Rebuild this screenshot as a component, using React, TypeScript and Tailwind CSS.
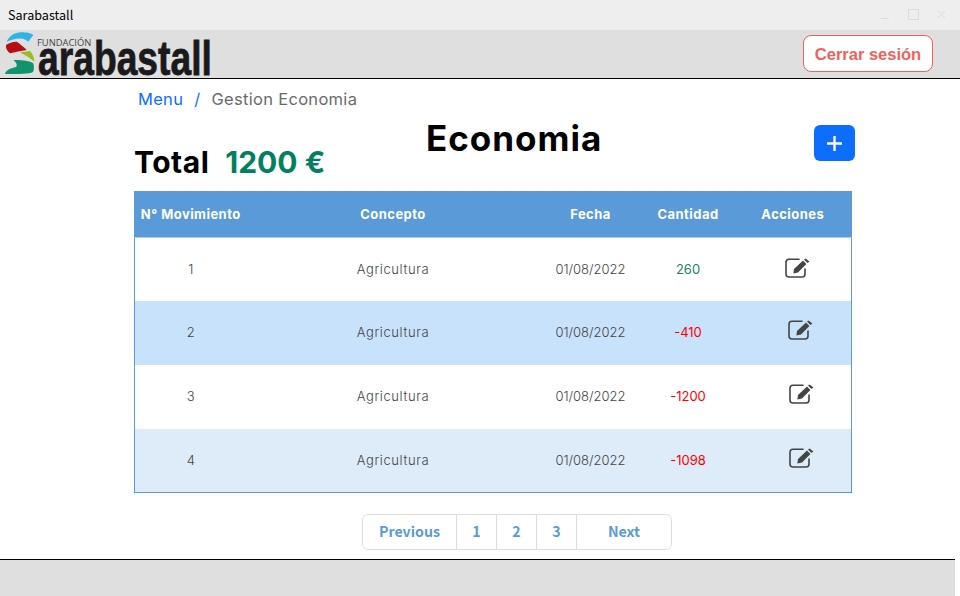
const movimientos = [
  { id: 1, cantidad: '260', color: 'text-[#198754]', bg: 'bg-white', icon: 'ml-[50px] mt-[-4px]' },
  { id: 2, cantidad: '-410', color: 'text-[#ff0000]', bg: 'bg-[#c9e2fc]', icon: 'ml-[53px] mt-[-7px]' },
  { id: 3, cantidad: '-1200', color: 'text-[#ff0000]', bg: 'bg-white', icon: 'ml-[54px] mt-[-6px]' },
  { id: 4, cantidad: '-1098', color: 'text-[#ff0000]', bg: 'bg-[#deebf9]', icon: 'ml-[54px] mt-[-4px]' },
];

const Logo = () => (
  <div className="flex items-start h-[48px] pl-[5px]">
    <svg width="30" height="43" viewBox="0 0 30 43" className="shrink-0 mt-[2px]">
      <path d="M1.7 9.7 C4 4 10 0 16.7 0.3 C21 0.3 26 1 28.3 3 L23.3 9.7 C20 7 17 6.5 15 6.5 C10 6.5 6 8 1.7 9.7 Z" fill="#2db4e4" />
      <path d="M1 13 C4 11 8 9.5 11.7 9.7 C15 12 19 15 21.7 18 C16 19 10 20 5 21.3 C2 19 0.5 16 1 13 Z" fill="#b50f14" />
      <path d="M15 20.5 L25 19 C28 22 29.3 26 29.3 30 C26 26 20 23 15 20.5 Z" fill="#95bf1f" />
      <path d="M0 42 C1 38 5 36.5 11 35 C13 33 11 30 8.3 28 C15 28 24 28.5 28.3 31.3 C29.5 35 29 38 28 40 C24 42 15 42 0 42 Z" fill="#12936f" />
    </svg>
    <div className="relative h-[48px] w-[176px] shrink-0">
      <span className="absolute left-[2px] top-[6px] text-[9.4px] leading-[14px] text-[#444] font-['Open_Sans',sans-serif]">FUNDACIÓN</span>
      <span className="absolute left-[3px] top-[4px] text-[49px] leading-[48px] font-bold text-[#1a1a1c] [-webkit-text-stroke:0.8px_#1a1a1c] font-['Liberation_Sans',sans-serif] whitespace-nowrap origin-left scale-x-[0.76]">arabastall</span>
    </div>
  </div>
);

const EditIcon = ({ className }: { className: string }) => (
  <svg width="25" height="20" viewBox="0 0 25 20" className={`block ${className}`}>
    <path d="M14 1.2 H4 a3 3 0 0 0 -3 3 V16 a3 3 0 0 0 3 3 H17 a3 3 0 0 0 3 -3 V11" fill="none" stroke="#444" strokeWidth="1.6" strokeLinecap="round" />
    <path d="M9 11 L18 2.6 L21.4 6 L13 14.5 L8.4 15.5 Z" fill="#444" />
    <path d="M19 1.6 L20.6 0.4 L24.4 3.6 L22.4 5 Z" fill="#444" />
  </svg>
);

export default function App() {
  return (
    <div className="w-[960px] h-[596px] flex flex-col bg-white overflow-hidden font-['Inter',sans-serif]">
      <div className="h-[30px] shrink-0 bg-[#eeeeee] flex items-center justify-between pl-[8px] pr-[15px]">
        <span className="text-[12.6px] text-black font-['Noto_Sans_CJK_SC',sans-serif]">Sarabastall</span>
        <div className="flex items-start gap-[19px] h-[11px] mt-[-2px]">
          <div className="w-[8px] h-[1px] bg-[#dcdcdc] mt-[9px]" />
          <div className="w-[11px] h-[11px] border border-[#dcdcdc]" />
          <svg width="7" height="7" viewBox="0 0 7 7" className="mt-[2px]">
            <path d="M0 0 L7 7 M7 0 L0 7" stroke="#dcdcdc" strokeWidth="1" />
          </svg>
        </div>
      </div>

      <header className="h-[49px] shrink-0 bg-[#dfdfdf] border-b border-black flex items-start justify-between pr-[27px]">
        <Logo />
        <button className="mt-[5px] w-[130px] h-[37px] pt-[1px] bg-white border border-[#f25f5c] rounded-[8px] text-[#f25f5c] text-[16.5px] font-bold font-['Liberation_Sans',sans-serif]">
          Cerrar sesión
        </button>
      </header>

      <main className="flex-1 min-h-0 pl-[134px] pr-[105px]">
        <nav className="pt-[10px] pl-[4px] h-[40px] text-[16.5px] leading-[20px] flex tracking-[0.3px]">
          <span className="text-[#0d6efd]">Menu</span>
          <span className="text-[#0d6efd] ml-[11px]">/</span>
          <span className="text-[#6b6b6b] ml-[11px]">Gestion Economia</span>
        </nav>

        <div className="relative h-[72px] flex items-start justify-between">
          <div className="mt-[25px] flex items-baseline gap-[16px] font-bold text-[30px] leading-[36px]">
            <span className="text-black tracking-[0.5px]">Total</span>
            <span className="text-[#008060]">1200 €</span>
          </div>
          <h1 className="absolute left-[292px] top-[-1px] text-[35px] leading-[40px] font-bold text-black tracking-[1px]">Economia</h1>
          <button className="mt-[6px] w-[41px] h-[36px] rounded-[6px] bg-[#0d6efd] flex items-center justify-center">
            <svg width="15" height="15" viewBox="0 0 15 15">
              <path d="M7.5 0v15M0 7.5h15" stroke="white" strokeWidth="2.4" />
            </svg>
          </button>
        </div>

        <table className="w-[717px] table-fixed border-collapse border border-[#5a9ad8] text-[13px] text-[#444]">
          <colgroup>
            <col className="w-[112px]" />
            <col className="w-[293px]" />
            <col className="w-[102px]" />
            <col className="w-[93px]" />
            <col className="w-[117px]" />
          </colgroup>
          <thead>
            <tr className="h-[46px] bg-[#5a9ad8] text-white text-[13px] border-b border-[#a9cbec] tracking-[0.45px]">
              <th className="font-bold whitespace-nowrap">N° Movimiento</th>
              <th className="font-bold">Concepto</th>
              <th className="font-bold">Fecha</th>
              <th className="font-bold">Cantidad</th>
              <th className="font-bold">Acciones</th>
            </tr>
          </thead>
          <tbody>
            {movimientos.map((m) => (
              <tr key={m.id} className={`h-[63.75px] ${m.bg}`}>
                <td className="text-center font-light">{m.id}</td>
                <td className="text-center font-light tracking-[0.6px]">Agricultura</td>
                <td className="text-center font-light">01/08/2022</td>
                <td className={`text-center ${m.color}`}>{m.cantidad}</td>
                <td>
                  <EditIcon className={m.icon} />
                </td>
              </tr>
            ))}
          </tbody>
        </table>

        <div className="mt-[21px] ml-[228px] flex w-[310px] h-[36px] border border-[#dedede] rounded-[6px] text-[14.2px] font-bold text-[#5a9ad8] font-['Noto_Sans_CJK_SC',sans-serif]">
          <span className="w-[94px] flex items-center justify-center border-r border-[#dedede]">Previous</span>
          <span className="w-[40px] flex items-center justify-center border-r border-[#dedede]">1</span>
          <span className="w-[40px] flex items-center justify-center border-r border-[#dedede]">2</span>
          <span className="w-[40px] flex items-center justify-center border-r border-[#dedede]">3</span>
          <span className="flex-1 flex items-center justify-center">Next</span>
        </div>
      </main>

      <footer className="h-[37px] shrink-0 w-[955px] bg-[#dfdfdf] border-t border-black" />
    </div>
  );
}
